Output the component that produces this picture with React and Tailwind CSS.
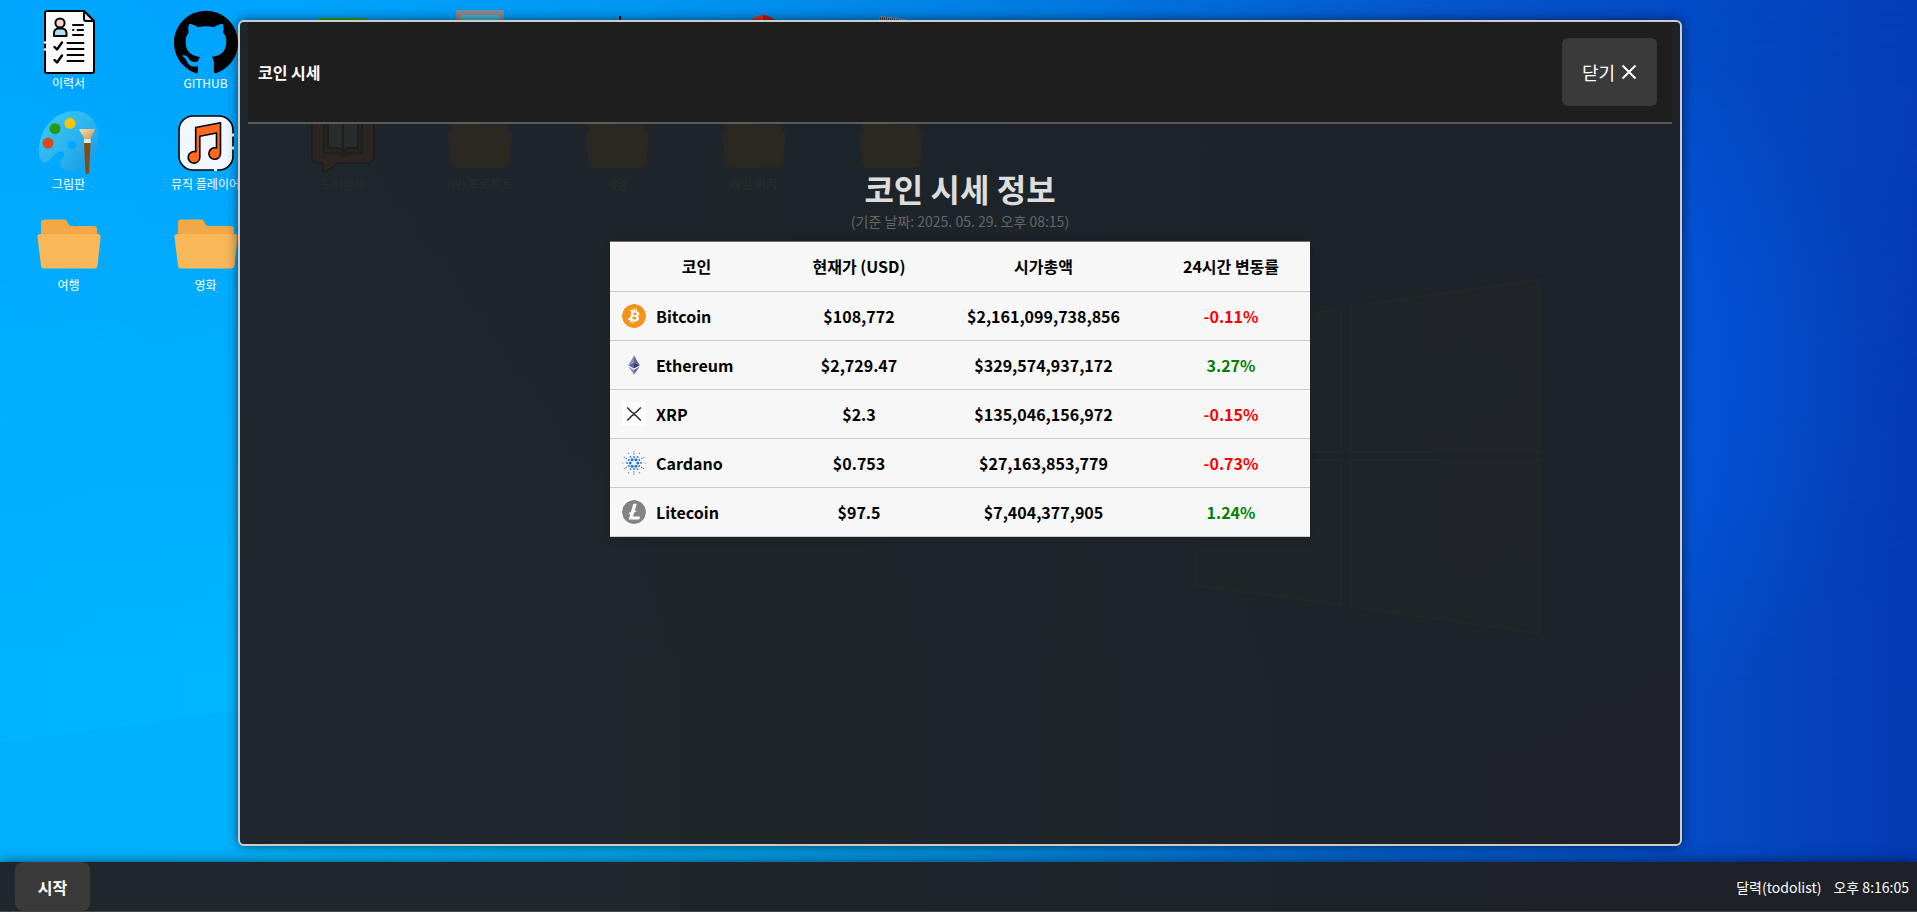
import React from "react";
import { SiBitcoin, SiGithub, SiLitecoin } from "react-icons/si";

const svgProps = { viewBox: "0 0 64 64", className: "block size-16", "aria-hidden": true };

function ResumeIcon() {
  return (
    <svg {...svgProps} fill="none" stroke="#000" strokeWidth="2" strokeLinecap="round" strokeLinejoin="round">
      <path d="M10 1H47L57 11V61a2 2 0 0 1-2 2H10a2 2 0 0 1-2-2V3a2 2 0 0 1 2-2Z" fill="#fafafa" />
      <path d="M47 1V9a2 2 0 0 0 2 2h8Z" fill="#e3e3e3" />
      <circle cx="23" cy="13" r="4.6" fill="#ffd3c4" />
      <path d="M17 26v-3a4.500 4.500 0 0 1 4.500-4.500h3.500a4.500 4.500 0 0 1 4.500 4.500v3Z" fill="#a8e2fb" />
      <path d="M36 15H46M36 20h.4M40.500 20H46M36 25H46M30.500 33H46.500M30.500 39H46.500M30.500 45H46.500M30.500 51H46.500" />
      <path d="M17.500 37l2.500 2.500 5-7M17.500 50l2.500 2.500 5-7" strokeWidth="2.400" />
      <path d="M8 32.500h.01M8 39.500h.01" stroke="#fff" strokeWidth="2.600" />
    </svg>
  );
}

function GithubIcon() {
  return <SiGithub className="block size-16 text-black" aria-hidden />;
}

function PaintIcon() {
  return (
    <svg {...svgProps}>
      <defs>
        <linearGradient id="palette" x1="0" y1="0" x2="1" y2="1">
          <stop offset="0" stopColor="#3ccdf5" />
          <stop offset="0.5" stopColor="#2cb4f0" />
          <stop offset="1" stopColor="#1b96e6" />
        </linearGradient>
        <linearGradient id="bristle" x1="0" y1="0" x2="1" y2="1">
          <stop offset="0" stopColor="#f7dfae" />
          <stop offset="1" stopColor="#c79658" />
        </linearGradient>
      </defs>
      <path
        fill="url(#palette)"
        fillRule="evenodd"
        d="M2 38C3 15 20 0 38 0C54 0 62 13 61 28C60 48 49 60 34 61C27 62 23 57 23 52C23 48 29 46 27 42C25 39 20 41 16 45C12 51 7 54 4 49C2 46 1.500 43 2 38ZM35 30a4 4 0 1 0 0 8a4 4 0 0 0 0-8Z"
      />
      <circle cx="18" cy="17.700" r="5.500" fill="#259b14" />
      <circle cx="33" cy="12.300" r="5.500" fill="#f8c40a" />
      <circle cx="11" cy="32" r="5.500" fill="#d9481a" />
      <path d="M42.300 18H57.700C57 22 54.500 24 53.700 28H47C46.500 24 43 22 42.300 18Z" fill="url(#bristle)" />
      <path d="M47 28H53.700V32H47Z" fill="#dfe6ee" />
      <path d="M47 32H53.500L52 62a1.800 1.800 0 0 1-3.500 0Z" fill="#8a4a0c" />
    </svg>
  );
}

function MusicIcon() {
  return (
    <svg {...svgProps} stroke="#000" strokeWidth="1.600" strokeLinejoin="round">
      <rect x="5" y="5" width="54" height="54" rx="14" fill="#f1f6ff" />
      <path d="M21.700 16.500L46.500 11.700V42.500a5.800 5.800 0 1 1-4-5.500V22L25.800 25.300V46.500a5.800 5.800 0 1 1-4.100-5.700Z" fill="#ff6a1f" />
      <path d="M59 22.500v3M59 35.500v3M40 59h3" stroke="#f1f6ff" strokeWidth="2" />
    </svg>
  );
}

function FolderIcon() {
  return (
    <svg {...svgProps}>
      <path d="M4 24V10.500A3 3 0 0 1 7 7.500H27.500C31 7.500 30.500 14 34 14H57a3 3 0 0 1 3 3V24Z" fill="#f2a845" />
      <path d="M3 22H61a2.500 2.500 0 0 1 2.600 3L60.500 54a3 3 0 0 1-3 2.600H7A3 3 0 0 1 4 54L.5 25A2.500 2.500 0 0 1 3 22Z" fill="#f8b85a" />
    </svg>
  );
}

function BookSearchIcon() {
  return (
    <svg {...svgProps} stroke="#000" strokeWidth="2" strokeLinejoin="round">
      <path d="M7 4H57a6 6 0 0 1 6 6V46a6 6 0 0 1-6 6H28L12 62V52H7a6 6 0 0 1-6-6V10a6 6 0 0 1 6-6Z" fill="#f2a23a" />
      <path d="M13 8H51V42H36l-4 3-4-3H13Z" fill="#c8862c" />
      <path d="M17 4H28l4 3 4-3H47V37H36l-4 3-4-3H17ZM32 7V40" fill="#e8eef5" />
    </svg>
  );
}

function LibraryIcon() {
  return (
    <svg {...svgProps}>
      <rect x="4" y="8" width="55" height="50" rx="6" fill="#3aa80f" />
    </svg>
  );
}

function LaptopIcon() {
  return (
    <svg {...svgProps}>
      <rect x="8" y="0" width="48" height="44" rx="2" fill="#8b8b90" />
      <rect x="13" y="5" width="38" height="34" fill="#42b9d8" />
      <path d="M2 46H62V52H2Z" fill="#8b8b90" />
    </svg>
  );
}

function AntennaIcon() {
  return (
    <svg {...svgProps}>
      <path d="M34 6H36V30H34ZM14 28H50V56H14Z" fill="#000" />
    </svg>
  );
}

function BallIcon() {
  return (
    <svg {...svgProps}>
      <path d="M41 5A16 16 0 0 0 41 37Z" fill="#e23327" />
      <path d="M41 5A16 16 0 0 1 41 37Z" fill="#b81f16" />
    </svg>
  );
}

function NotepadIcon() {
  return (
    <svg {...svgProps}>
      <path d="M21 6L56 11L48 60L12 55Z" fill="#8fa3a8" />
      <path d="M21 8L54 13" stroke="#3b3b3b" strokeWidth="3" strokeDasharray="1 1" />
    </svg>
  );
}

const shortcuts = [
  { id: "resume", label: "이력서", Icon: ResumeIcon },
  { id: "github", label: "GITHUB", Icon: GithubIcon },
  { id: "library", label: "", Icon: LibraryIcon },
  { id: "laptop", label: "", Icon: LaptopIcon },
  { id: "antenna", label: "", Icon: AntennaIcon },
  { id: "ball", label: "", Icon: BallIcon },
  { id: "notepad", label: "", Icon: NotepadIcon },
  { id: "paint", label: "그림판", Icon: PaintIcon },
  { id: "music", label: "뮤직 플레이어", Icon: MusicIcon },
  { id: "book", label: "도서검색", Icon: BookSearchIcon },
  { id: "team", label: "(팀) 프로젝트", Icon: FolderIcon },
  { id: "game", label: "게임", Icon: FolderIcon },
  { id: "wiki", label: "게임 위키", Icon: FolderIcon },
  { id: "misc", label: "", Icon: FolderIcon },
  { id: "travel", label: "여행", Icon: FolderIcon },
  { id: "movie", label: "영화", Icon: FolderIcon },
];

function Wallpaper() {
  return (
    <svg className="absolute inset-0 h-full w-full" viewBox="0 0 1917 912" preserveAspectRatio="none" aria-hidden>
      <defs>
        <linearGradient id="sky" x1="0" y1="0" x2="1" y2="0">
          <stop offset="0" stopColor="#00a6ff" />
          <stop offset="0.16" stopColor="#00a3fd" />
          <stop offset="0.33" stopColor="#0098f3" />
          <stop offset="0.55" stopColor="#007ae2" />
          <stop offset="0.75" stopColor="#0656cc" />
          <stop offset="0.88" stopColor="#034bc8" />
          <stop offset="1" stopColor="#043eb8" />
        </linearGradient>
        <linearGradient id="ground" x1="0" y1="0" x2="1" y2="0">
          <stop offset="0" stopColor="#00b4ff" />
          <stop offset="0.13" stopColor="#00b6ff" />
          <stop offset="0.33" stopColor="#00a8ee" />
          <stop offset="0.5" stopColor="#0090e0" />
          <stop offset="0.72" stopColor="#0461cc" />
          <stop offset="0.88" stopColor="#044cc6" />
          <stop offset="1" stopColor="#043ab4" />
        </linearGradient>
        <linearGradient id="fade" x1="0" y1="0" x2="0" y2="1">
          <stop offset="0" stopColor="#000" />
          <stop offset="0.75" stopColor="#fff" />
        </linearGradient>
        <mask id="lower">
          <rect width="1917" height="912" fill="url(#fade)" />
        </mask>
        <radialGradient id="glow" gradientUnits="userSpaceOnUse" cx="1500" cy="380" r="380">
          <stop offset="0" stopColor="#0560f0" stopOpacity="0.8" />
          <stop offset="1" stopColor="#0560f0" stopOpacity="0" />
        </radialGradient>
      </defs>
      <rect width="1917" height="912" fill="url(#sky)" />
      <rect width="1917" height="912" fill="url(#ground)" mask="url(#lower)" />
      <rect width="1917" height="912" fill="url(#glow)" />
      <path d="M0 743L240 710V912H0Z" fill="#00a8fa" fillOpacity="0.25" />
      <path d="M560 0L1000 110L640 20Z" fill="#40b8ff" fillOpacity="0.35" />
      <g fill="#60c0b0" fillOpacity="0.35" stroke="#80d8b0" strokeOpacity="0.5" strokeWidth="2">
        <path d="M1195 337L1342 308V452H1195Z" />
        <path d="M1350 306L1540 279V452H1350Z" />
        <path d="M1195 460H1342V605L1195 586Z" />
        <path d="M1350 460H1540V634L1350 607Z" />
      </g>
    </svg>
  );
}

function EthereumIcon() {
  return (
    <svg viewBox="0 0 24 24" className="size-6 shrink-0" aria-hidden>
      <path d="M12 2.500L6.200 12.200L12 9.600Z" fill="#8a92c4" />
      <path d="M12 2.500L17.800 12.200L12 9.600Z" fill="#62689c" />
      <path d="M6.200 12.200L12 9.600V15.600Z" fill="#62689c" />
      <path d="M17.800 12.200L12 9.600V15.600Z" fill="#3a3f75" />
      <path d="M6.200 13.600L12 17V21.500Z" fill="#8a92c4" />
      <path d="M17.800 13.600L12 17V21.500Z" fill="#62689c" />
    </svg>
  );
}

function XrpIcon() {
  return (
    <svg viewBox="0 0 24 24" className="size-6 shrink-0 bg-white" fill="none" stroke="#23292f" strokeWidth="1.500" aria-hidden>
      <path d="M5.200 5.500L9.600 10a3.400 3.400 0 0 0 4.800 0L18.800 5.500M5.200 18.500L9.600 14a3.400 3.400 0 0 1 4.800 0L18.800 18.500" />
    </svg>
  );
}

const cardanoRings = [
  { radius: 3.8, size: 1.5, count: 6, turn: 0 },
  { radius: 6, size: 0.9, count: 6, turn: 30 },
  { radius: 7, size: 0.9, count: 6, turn: 0 },
  { radius: 9, size: 0.7, count: 6, turn: 30 },
  { radius: 11.2, size: 0.6, count: 12, turn: 0 },
];

function CardanoIcon() {
  return (
    <svg viewBox="0 0 24 24" className="size-6 shrink-0" fill="#2a71d8" aria-hidden>
      {cardanoRings.flatMap(({ radius, size, count, turn }) =>
        Array.from({ length: count }, (_, i) => {
          const a = ((turn + (360 / count) * i) * Math.PI) / 180;
          return <circle key={`${radius}-${i}`} cx={12 + radius * Math.cos(a)} cy={12 + radius * Math.sin(a)} r={size} />;
        })
      )}
    </svg>
  );
}

function BitcoinIcon() {
  return <SiBitcoin className="size-6 shrink-0 rounded-full bg-white text-[#f7931a]" aria-hidden />;
}

function LitecoinIcon() {
  return <SiLitecoin className="size-6 shrink-0 rounded-full bg-white text-[#838383]" aria-hidden />;
}

const coins = [
  { name: "Bitcoin", Icon: BitcoinIcon, price: "$108,772", cap: "$2,161,099,738,856", change: "-0.11%" },
  { name: "Ethereum", Icon: EthereumIcon, price: "$2,729.47", cap: "$329,574,937,172", change: "3.27%" },
  { name: "XRP", Icon: XrpIcon, price: "$2.3", cap: "$135,046,156,972", change: "-0.15%" },
  { name: "Cardano", Icon: CardanoIcon, price: "$0.753", cap: "$27,163,853,779", change: "-0.73%" },
  { name: "Litecoin", Icon: LitecoinIcon, price: "$97.5", cap: "$7,404,377,905", change: "1.24%" },
];

function CoinTable() {
  return (
    <div className="mt-2 w-full max-w-[700px] border-t border-[#6b6e70] shadow-[0_0_10px_rgba(0,0,0,0.2)]">
      <table className="w-full table-fixed border-collapse bg-[#f7f7f7] text-center text-base font-bold text-black">
        <colgroup>
          <col className="w-[173px]" />
          <col className="w-[152px]" />
          <col className="w-[217px]" />
          <col className="w-[158px]" />
        </colgroup>
        <thead>
          <tr className="h-[49px] border-b border-[#cccccc]">
            <th scope="col">코인</th>
            <th scope="col">현재가 (USD)</th>
            <th scope="col">시가총액</th>
            <th scope="col">24시간 변동률</th>
          </tr>
        </thead>
        <tbody>
          {coins.map(({ name, Icon, price, cap, change }) => (
            <tr key={name} className="h-[49px] border-b border-[#cccccc]">
              <td className="px-3">
                <div className="flex items-center gap-2.5">
                  <Icon />
                  {name}
                </div>
              </td>
              <td>{price}</td>
              <td>{cap}</td>
              <td className={change.startsWith("-") ? "text-[#ff0000]" : "text-[#008000]"}>{change}</td>
            </tr>
          ))}
        </tbody>
      </table>
    </div>
  );
}

function CoinWindow() {
  return (
    <section
      aria-labelledby="window-title"
      className="absolute top-5 right-[235px] bottom-4 left-[238px] flex flex-col rounded-md border-2 border-[#cccccc] bg-[#202020]/95 px-2 shadow-[0_0_12px_rgba(0,0,0,0.6)]"
    >
      <header className="flex items-center justify-between border-b-2 border-[#5a5a5a] bg-[#1e1e1e] py-4 pr-[15px] pl-2.5">
        <h1 id="window-title" className="text-base font-bold text-white">
          코인 시세
        </h1>
        <button type="button" className="flex h-[68px] items-center gap-1.5 rounded-md bg-[#3a3a3a] px-5 text-lg text-white">
          닫기
          <svg viewBox="0 0 16 16" className="size-4" stroke="currentColor" strokeWidth="2" aria-hidden>
            <path d="M1.500 1.500L14.500 14.500M14.500 1.500L1.500 14.500" />
          </svg>
        </button>
      </header>
      <div className="flex flex-col items-center pt-[43px]">
        <h2 className="text-[32px] leading-[42px] font-bold text-[#dddddd]">코인 시세 정보</h2>
        <p className="text-sm leading-6 text-[#666666]">(기준 날짜: 2025. 05. 29. 오후 08:15)</p>
        <CoinTable />
      </div>
    </section>
  );
}

export default function App() {
  return (
    <div className="relative flex h-screen flex-col overflow-hidden bg-[#0090f0] font-['Noto_Sans_CJK_KR','Noto_Sans',sans-serif]">
      <Wallpaper />
      <main className="relative flex-1">
        <nav aria-label="바탕화면" className="grid grid-cols-[repeat(auto-fill,137px)] gap-y-[17px] pt-2.5">
          {shortcuts.map(({ id, label, Icon }, i) => (
            <a
              key={id}
              href={`#${id}`}
              className={`flex flex-col items-center text-xs leading-[18px] text-white ${i === 7 || i === 14 ? "col-start-1" : ""}`}
            >
              <Icon />
              <span className="h-5">{label}</span>
            </a>
          ))}
        </nav>
        <CoinWindow />
      </main>
      <footer className="relative flex h-[50px] items-center justify-between border-b border-[#4a4542] bg-[#202020]/95 pr-2 pl-[15px] text-sm text-white shadow-[0_0_12px_rgba(0,0,0,0.6)]">
        <button type="button" className="h-full w-[75px] rounded-lg bg-[#3a3a3a] text-base font-bold">
          시작
        </button>
        <div className="flex items-center gap-3">
          <button type="button">달력(todolist)</button>
          <time dateTime="20:16:05">오후 8:16:05</time>
        </div>
      </footer>
    </div>
  );
}
